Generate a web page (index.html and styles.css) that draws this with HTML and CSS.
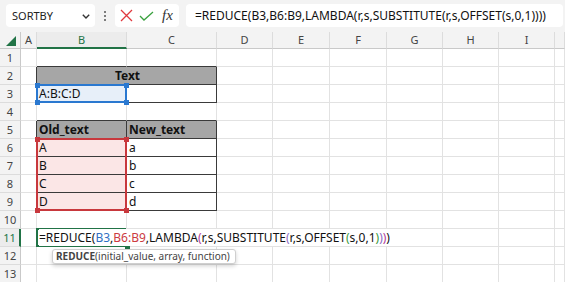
FILE: index.html
```html
<!DOCTYPE html>
<html>
<head>
<meta charset="utf-8">
<link rel="stylesheet" href="styles.css">
</head>
<body>
<div class="app">
  <div class="toolbar">
    <div class="namebox">
      <span class="name">SORTBY</span>
      <svg class="chev" width="8" height="5" viewBox="0 0 8 5"><path d="M0.8 0.8 L4 4 L7.2 0.8" fill="none" stroke="#333" stroke-width="1.4"/></svg>
    </div>
    <div class="dots"><span></span><span></span><span></span></div>
    <div class="btns">
      <svg class="ico-x" width="13" height="13" viewBox="0 0 13 13"><path d="M1 1 L12 12 M12 1 L1 12" stroke="#e0393e" stroke-width="1.3" fill="none"/></svg>
      <svg class="ico-ok" width="15" height="10" viewBox="0 0 15 10"><path d="M1 5 L5 9 L14 1" stroke="#3aa13f" stroke-width="1.3" fill="none"/></svg>
      <span class="fx">fx</span>
    </div>
    <div class="formula">=REDUCE(B3,B6:B9,LAMBDA(r,s,SUBSTITUTE(r,s,OFFSET(s,0,1))))</div>
  </div>

  <div class="sheet">
    <div class="ch corner"><svg width="10" height="10" viewBox="0 0 10 10"><path d="M10 0 L10 10 L0 10 Z" fill="#217346"/></svg></div>
    <div class="ch">A</div>
    <div class="ch sel">B</div>
    <div class="ch">C</div>
    <div class="ch">D</div>
    <div class="ch">E</div>
    <div class="ch">F</div>
    <div class="ch">G</div>
    <div class="ch">H</div>
    <div class="ch">I</div>
    <div class="ch"></div>

    <!-- row 1 -->
    <div class="rh">1</div>
    <div class="c"></div><div class="c dkb"></div><div class="c dkb"></div>
    <div class="c"></div><div class="c"></div><div class="c"></div><div class="c"></div><div class="c"></div><div class="c"></div><div class="c"></div>

    <!-- row 2 -->
    <div class="rh">2</div>
    <div class="c dkr"></div><div class="c span2 hd ctr dkb dkr">Text</div>
    <div class="c"></div><div class="c"></div><div class="c"></div><div class="c"></div><div class="c"></div><div class="c"></div><div class="c"></div>

    <!-- row 3 -->
    <div class="rh">3</div>
    <div class="c dkr"></div>
    <div class="c dkb dkr bluefill">A:B:C:D<div class="selbox blue"><i class="h tl"></i><i class="h tr"></i><i class="h bl"></i><i class="h br"></i></div></div>
    <div class="c dkb dkr"></div>
    <div class="c"></div><div class="c"></div><div class="c"></div><div class="c"></div><div class="c"></div><div class="c"></div><div class="c"></div>

    <!-- row 4 -->
    <div class="rh">4</div>
    <div class="c"></div><div class="c dkb"></div><div class="c dkb"></div>
    <div class="c"></div><div class="c"></div><div class="c"></div><div class="c"></div><div class="c"></div><div class="c"></div><div class="c"></div>

    <!-- row 5 -->
    <div class="rh">5</div>
    <div class="c dkr"></div><div class="c hd dkb dkr">Old_text</div><div class="c hd dkb dkr">New_text</div>
    <div class="c"></div><div class="c"></div><div class="c"></div><div class="c"></div><div class="c"></div><div class="c"></div><div class="c"></div>

    <!-- row 6 -->
    <div class="rh">6</div>
    <div class="c dkr"></div>
    <div class="c dkb dkr pink">A<div class="selbox red span4"><i class="h tl"></i><i class="h tr"></i><i class="h bl"></i><i class="h br"></i></div></div>
    <div class="c dkb dkr">a</div>
    <div class="c"></div><div class="c"></div><div class="c"></div><div class="c"></div><div class="c"></div><div class="c"></div><div class="c"></div>

    <!-- row 7 -->
    <div class="rh">7</div>
    <div class="c dkr"></div><div class="c dkb dkr pink">B</div><div class="c dkb dkr">b</div>
    <div class="c"></div><div class="c"></div><div class="c"></div><div class="c"></div><div class="c"></div><div class="c"></div><div class="c"></div>

    <!-- row 8 -->
    <div class="rh">8</div>
    <div class="c dkr"></div><div class="c dkb dkr pink">C</div><div class="c dkb dkr">c</div>
    <div class="c"></div><div class="c"></div><div class="c"></div><div class="c"></div><div class="c"></div><div class="c"></div><div class="c"></div>

    <!-- row 9 -->
    <div class="rh">9</div>
    <div class="c dkr"></div><div class="c dkb dkr pink">D</div><div class="c dkb dkr">d</div>
    <div class="c"></div><div class="c"></div><div class="c"></div><div class="c"></div><div class="c"></div><div class="c"></div><div class="c"></div>

    <!-- row 10 -->
    <div class="rh">10</div>
    <div class="c"></div><div class="c"></div><div class="c"></div>
    <div class="c"></div><div class="c"></div><div class="c"></div><div class="c"></div><div class="c"></div><div class="c"></div><div class="c"></div>

    <!-- row 11 -->
    <div class="rh act">11</div>
    <div class="c"></div>
    <div class="c edit"><div class="selbox green"><i class="h br"></i></div><span class="ed">=REDUCE(<span class="rb">B3</span>,<span class="rr">B6:B9</span>,LAMBDA<span class="p1">(</span>r,s,SUBSTITUTE<span class="p2">(</span>r,s,OFFSET<span class="p3">(</span>s,0,1<span class="p3">)</span><span class="p2">)</span><span class="p1">)</span>)</span></div>
    <div class="c"></div>
    <div class="c"></div><div class="c"></div><div class="c"></div><div class="c"></div><div class="c"></div><div class="c"></div><div class="c"></div>

    <!-- row 12 -->
    <div class="rh">12</div>
    <div class="c"></div>
    <div class="c tipcell"><div class="tip"><b>REDUCE</b>(initial_value, array, function)</div></div>
    <div class="c"></div>
    <div class="c"></div><div class="c"></div><div class="c"></div><div class="c"></div><div class="c"></div><div class="c"></div><div class="c"></div>

    <!-- row 13 -->
    <div class="rh">13</div>
    <div class="c"></div><div class="c"></div><div class="c"></div>
    <div class="c"></div><div class="c"></div><div class="c"></div><div class="c"></div><div class="c"></div><div class="c"></div><div class="c"></div>
  </div>
</div>
</body>
</html>
```

FILE: styles.css
```css
html, body {
  margin: 0;
  padding: 0;
  background: #ffffff;
}
body {
  width: 565px;
  height: 282px;
  overflow: hidden;
  font-family: "Noto Sans", "DejaVu Sans", sans-serif;
  color: #222;
}
.app {
  width: 565px;
  height: 282px;
  overflow: hidden;
}

/* toolbar */
.toolbar {
  box-sizing: border-box;
  height: 32px;
  display: flex;
  align-items: flex-start;
  padding: 4px 2px 0 6px;
  background: #f3f3f3;
}
.namebox {
  box-sizing: border-box;
  width: 89px;
  height: 23px;
  background: #fff;
  border-radius: 4px;
  display: flex;
  align-items: center;
  justify-content: space-between;
  padding: 0 5px 0 6px;
}
.name {
  font-size: 11px;
  color: #222;
}
.chev { margin-top: 1px; }
.dots {
  width: 20px;
  height: 23px;
  display: flex;
  flex-direction: column;
  align-items: center;
  justify-content: center;
  gap: 2px;
}
.dots span {
  width: 2px;
  height: 2px;
  background: #555;
  border-radius: 1px;
}
.btns {
  box-sizing: border-box;
  width: 64px;
  height: 23px;
  background: #fff;
  border-radius: 4px;
  display: flex;
  align-items: center;
  padding-left: 5px;
}
.ico-x { margin-right: 6px; }
.ico-ok { margin-right: 8px; margin-top: 1px; }
.fx {
  font-family: "Liberation Serif", "DejaVu Serif", serif;
  font-style: italic;
  font-size: 15px;
  color: #333;
  line-height: 23px;
}
.formula {
  box-sizing: border-box;
  flex: 1;
  margin-left: 7px;
  height: 23px;
  background: #fff;
  border-radius: 4px;
  padding-left: 9px;
  font-size: 12px;
  line-height: 23px;
  color: #111;
  white-space: nowrap;
  overflow: hidden;
}

/* sheet */
.sheet {
  display: grid;
  grid-template-columns: 21px 16px 90px 90px 56px 57px 57px 56px 56px 56px 1fr;
  grid-template-rows: 17px repeat(13, 18px);
  background: #fff;
}
.ch {
  box-sizing: border-box;
  background: #f3f3f3;
  border-right: 1px solid #dcdcdc;
  border-bottom: 1px solid #c9c9c9;
  font-size: 11px;
  line-height: 16px;
  text-align: center;
  color: #444;
}
.ch.sel {
  color: #217346;
  border-bottom: 2px solid #217346;
  background: #ececec;
}
.corner {
  display: flex;
  align-items: flex-end;
  justify-content: flex-end;
  padding: 0 4px 2px 0;
  border-right-color: #c9c9c9;
}
.rh {
  box-sizing: border-box;
  background: #f3f3f3;
  border-right: 1px solid #c9c9c9;
  border-bottom: 1px solid #dcdcdc;
  font-size: 11px;
  line-height: 18px;
  text-align: center;
  color: #444;
}
.rh.act {
  color: #217346;
  border-right: 2px solid #217346;
  background: #ececec;
}
.c {
  box-sizing: border-box;
  position: relative;
  border-right: 1px solid #e2e2e2;
  border-bottom: 1px solid #e2e2e2;
  font-size: 12px;
  line-height: 17px;
  padding-left: 2px;
  white-space: nowrap;
  color: #111;
}
.dkb { border-bottom-color: #3a3a3a; }
.dkr { border-right-color: #3a3a3a; }
.span2 { grid-column: span 2; }
.hd {
  background: #a6a6a6;
  font-weight: 700;
  color: #111;
}
.ctr { text-align: center; }
.bluefill { background: #e7eff9; }
.pink { background: #fbe6e6; }

/* selection boxes */
.selbox {
  position: absolute;
  left: -1px;
  top: -1px;
  right: -1px;
  bottom: -1px;
  border: 2px solid;
  z-index: 3;
  pointer-events: none;
}
.selbox.blue { border-color: #2a78d0; }
.selbox.red { border-color: #c8383d; bottom: -55px; }
.selbox.green {
  border-color: #217346;
  border-right: none;
  right: 0;
  z-index: 1;
}
.h {
  position: absolute;
  width: 5px;
  height: 5px;
  display: block;
}
.blue .h { background: #2a78d0; }
.red .h { background: #c8383d; }
.green .h { background: #217346; }
.h.tl { left: -3.5px; top: -3.5px; }
.h.tr { right: -3.5px; top: -3.5px; }
.h.bl { left: -3.5px; bottom: -3.5px; }
.h.br { right: -3.5px; bottom: -3.5px; }

/* in-cell editor */
.edit { overflow: visible; }
.ed {
  position: relative;
  z-index: 2;
  background: #fff;
  padding-right: 2px;
  color: #111;
}
.rb { color: #2f6fc3; }
.rr { color: #cc3a3f; }
.p1 { color: #b23c9c; }
.p2 { color: #8d69c4; }
.p3 { color: #3a9a3c; }

/* tooltip */
.tipcell { overflow: visible; }
.tip {
  position: absolute;
  left: 15px;
  top: 2px;
  z-index: 5;
  box-sizing: border-box;
  height: 15px;
  padding: 0 5px 0 3px;
  background: #fff;
  border: 1px solid #cfcfcf;
  border-radius: 3px;
  box-shadow: 0 2px 4px rgba(0, 0, 0, 0.18);
  font-size: 10px;
  line-height: 13px;
  color: #444;
  white-space: nowrap;
}
.tip b { font-weight: 700; color: #444; }
```
